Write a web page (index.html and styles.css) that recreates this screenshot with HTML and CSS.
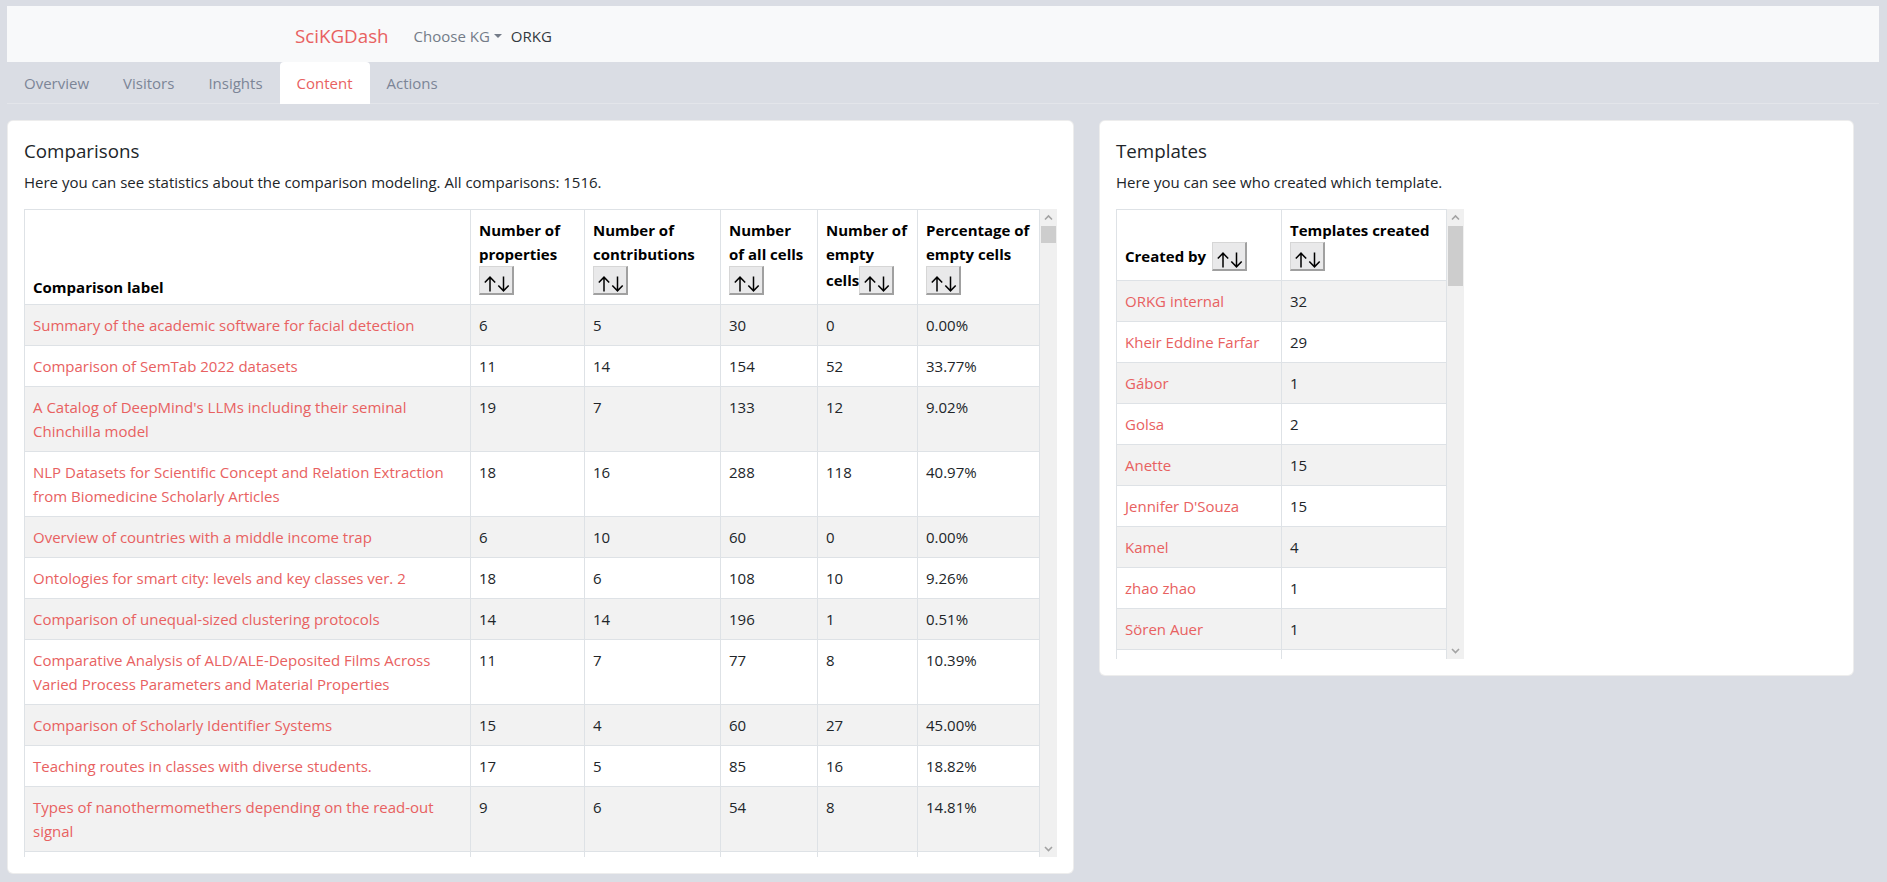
FILE: index.html
```html
<!DOCTYPE html>
<html lang="en">
<head>
<meta charset="utf-8">
<title>SciKGDash</title>
<link rel="stylesheet" href="styles.css">
</head>
<body>
<nav class="navbar">
  <a class="brand" href="#">SciKGDash</a>
  <span class="kg-choose">Choose KG<span class="caret"></span></span>
  <span class="kg-current">ORKG</span>
</nav>
<ul class="tabs">
  <li class="tab">Overview</li>
  <li class="tab">Visitors</li>
  <li class="tab">Insights</li>
  <li class="tab active">Content</li>
  <li class="tab">Actions</li>
</ul>
<main class="content">
  <section class="col">
    <div class="card">
      <h5 class="card-title">Comparisons</h5>
      <p class="card-text">Here you can see statistics about the comparison modeling. All comparisons: 1516.</p>
      <div class="scroll-frame scroll-frame-main">
        <div class="scroll-view">
          <table class="table">
            <colgroup>
              <col class="w-label"><col class="w-props"><col class="w-contrib"><col class="w-cells"><col class="w-empty"><col>
            </colgroup>
            <thead>
              <tr>
                <th class="th-plain">Comparison label</th>
                <th>Number of<br>properties<br><button class="sort-btn"><svg viewBox="0 0 26 16"><path d="M6 15.5V1M0.8 6.6 6 1.2 11.2 6.6M19.5 0.5V15M14.3 9.4 19.5 14.8 24.7 9.4"/></svg></button></th>
                <th>Number of<br>contributions<br><button class="sort-btn"><svg viewBox="0 0 26 16"><path d="M6 15.5V1M0.8 6.6 6 1.2 11.2 6.6M19.5 0.5V15M14.3 9.4 19.5 14.8 24.7 9.4"/></svg></button></th>
                <th>Number<br>of all cells<br><button class="sort-btn"><svg viewBox="0 0 26 16"><path d="M6 15.5V1M0.8 6.6 6 1.2 11.2 6.6M19.5 0.5V15M14.3 9.4 19.5 14.8 24.7 9.4"/></svg></button></th>
                <th>Number of<br>empty<br>cells<button class="sort-btn"><svg viewBox="0 0 26 16"><path d="M6 15.5V1M0.8 6.6 6 1.2 11.2 6.6M19.5 0.5V15M14.3 9.4 19.5 14.8 24.7 9.4"/></svg></button></th>
                <th>Percentage of<br>empty cells<br><button class="sort-btn"><svg viewBox="0 0 26 16"><path d="M6 15.5V1M0.8 6.6 6 1.2 11.2 6.6M19.5 0.5V15M14.3 9.4 19.5 14.8 24.7 9.4"/></svg></button></th>
              </tr>
            </thead>
            <tbody>
              <tr><td><a href="#">Summary of the academic software for facial detection</a></td><td>6</td><td>5</td><td>30</td><td>0</td><td>0.00%</td></tr>
              <tr><td><a href="#">Comparison of SemTab 2022 datasets</a></td><td>11</td><td>14</td><td>154</td><td>52</td><td>33.77%</td></tr>
              <tr><td><a href="#">A Catalog of DeepMind's LLMs including their seminal Chinchilla model</a></td><td>19</td><td>7</td><td>133</td><td>12</td><td>9.02%</td></tr>
              <tr><td><a href="#">NLP Datasets for Scientific Concept and Relation Extraction from Biomedicine Scholarly Articles</a></td><td>18</td><td>16</td><td>288</td><td>118</td><td>40.97%</td></tr>
              <tr><td><a href="#">Overview of countries with a middle income trap</a></td><td>6</td><td>10</td><td>60</td><td>0</td><td>0.00%</td></tr>
              <tr><td><a href="#">Ontologies for smart city: levels and key classes ver. 2</a></td><td>18</td><td>6</td><td>108</td><td>10</td><td>9.26%</td></tr>
              <tr><td><a href="#">Comparison of unequal-sized clustering protocols</a></td><td>14</td><td>14</td><td>196</td><td>1</td><td>0.51%</td></tr>
              <tr><td><a href="#">Comparative Analysis of ALD/ALE-Deposited Films Across Varied Process Parameters and Material Properties</a></td><td>11</td><td>7</td><td>77</td><td>8</td><td>10.39%</td></tr>
              <tr><td><a href="#">Comparison of Scholarly Identifier Systems</a></td><td>15</td><td>4</td><td>60</td><td>27</td><td>45.00%</td></tr>
              <tr><td><a href="#">Teaching routes in classes with diverse students.</a></td><td>17</td><td>5</td><td>85</td><td>16</td><td>18.82%</td></tr>
              <tr><td><a href="#">Types of nanothermomethers depending on the read-out signal</a></td><td>9</td><td>6</td><td>54</td><td>8</td><td>14.81%</td></tr>
              <tr class="row-pending"><td></td><td></td><td></td><td></td><td></td><td></td></tr>
            </tbody>
          </table>
        </div>
        <div class="scrollbar" aria-hidden="true">
          <span class="sb-btn"><svg viewBox="0 0 17 17"><path d="M5 10.5 8.5 7 12 10.5"/></svg></span>
          <span class="sb-track"><span class="sb-thumb sb-thumb-min"></span></span>
          <span class="sb-btn"><svg viewBox="0 0 17 17"><path d="M5 7 8.5 10.5 12 7"/></svg></span>
        </div>
      </div>
    </div>
  </section>
  <section class="col">
    <div class="card">
      <h5 class="card-title">Templates</h5>
      <p class="card-text">Here you can see who created which template.</p>
      <div class="scroll-frame scroll-frame-side">
        <div class="scroll-view">
          <table class="table">
            <thead>
              <tr>
                <th>Created by <button class="sort-btn"><svg viewBox="0 0 26 16"><path d="M6 15.5V1M0.8 6.6 6 1.2 11.2 6.6M19.5 0.5V15M14.3 9.4 19.5 14.8 24.7 9.4"/></svg></button></th>
                <th>Templates created<br><button class="sort-btn"><svg viewBox="0 0 26 16"><path d="M6 15.5V1M0.8 6.6 6 1.2 11.2 6.6M19.5 0.5V15M14.3 9.4 19.5 14.8 24.7 9.4"/></svg></button></th>
              </tr>
            </thead>
            <tbody>
              <tr><td><a href="#">ORKG internal</a></td><td>32</td></tr>
              <tr><td><a href="#">Kheir Eddine Farfar</a></td><td>29</td></tr>
              <tr><td><a href="#">Gábor</a></td><td>1</td></tr>
              <tr><td><a href="#">Golsa</a></td><td>2</td></tr>
              <tr><td><a href="#">Anette</a></td><td>15</td></tr>
              <tr><td><a href="#">Jennifer D'Souza</a></td><td>15</td></tr>
              <tr><td><a href="#">Kamel</a></td><td>4</td></tr>
              <tr><td><a href="#">zhao zhao</a></td><td>1</td></tr>
              <tr><td><a href="#">Sören Auer</a></td><td>1</td></tr>
              <tr class="row-pending"><td></td><td></td></tr>
            </tbody>
          </table>
        </div>
        <div class="scrollbar" aria-hidden="true">
          <span class="sb-btn"><svg viewBox="0 0 17 17"><path d="M5 10.5 8.5 7 12 10.5"/></svg></span>
          <span class="sb-track"><span class="sb-thumb sb-thumb-side"></span></span>
          <span class="sb-btn"><svg viewBox="0 0 17 17"><path d="M5 7 8.5 10.5 12 7"/></svg></span>
        </div>
      </div>
    </div>
  </section>
</main>
</body>
</html>
```

FILE: styles.css
```css
* { box-sizing: border-box; }

html, body { margin: 0; }

body {
  background: #dadde4;
  font-family: "Open Sans", "Noto Sans", sans-serif;
  font-size: 15px;
  line-height: 24px;
  color: #212529;
  padding: 6px 8px 0 7px;
  height: 882px;
  overflow: hidden;
}

a { color: #e86161; text-decoration: none; }

/* navbar */
.navbar {
  display: flex;
  align-items: center;
  height: 56px;
  padding: 4px 0 0 288px;
  background: #f8f9fa;
}
.brand {
  font-size: 18.75px;
  line-height: 30px;
  color: #e86161;
  margin-right: 25px;
}
.kg-choose {
  display: flex;
  align-items: center;
  color: #747c88;
}
.caret {
  width: 0;
  height: 0;
  margin-left: 4px;
  border-top: 4.5px solid #747c88;
  border-left: 4px solid transparent;
  border-right: 4px solid transparent;
}
.kg-current {
  color: #343a40;
  margin-left: 9px;
}

/* tabs */
.tabs {
  display: flex;
  list-style: none;
  margin: 0;
  padding: 0;
  border-bottom: 1px solid #e3e5ea;
}
.tab {
  padding: 8px 16px;
  border: 1px solid transparent;
  border-radius: 4px 4px 0 0;
  margin-bottom: -1px;
  color: #7c8597;
}
.tab.active {
  background: #fff;
  color: #e86161;
}

/* layout */
.content {
  display: grid;
  grid-template-columns: 7fr 5fr;
  align-items: start;
  margin-top: 16px;
}
.col { padding-right: 25px; }

.card {
  background: #fff;
  border: 1px solid rgba(0, 0, 0, 0.07);
  border-radius: 6px;
  padding: 16px;
}
.card-title {
  font-size: 18.75px;
  font-weight: 400;
  line-height: 24px;
  margin: 0 0 7px;
  padding-top: 2px;
  color: #212529;
}
.card-text { margin: 0 0 15px; }

/* scrollable table frame */
.scroll-frame { display: flex; }
.scroll-frame-main { height: 648px; }
.scroll-frame-side { height: 450px; width: 348px; }
.scroll-view { flex: 1; min-width: 0; overflow: hidden; }

.scrollbar {
  width: 17px;
  flex: none;
  display: flex;
  flex-direction: column;
  background: #f0f0f0;
}
.sb-btn { height: 17px; flex: none; }
.sb-btn svg {
  display: block;
  width: 17px;
  height: 17px;
  fill: none;
  stroke: #a3a3a3;
  stroke-width: 1.6;
}
.sb-track { flex: 1; display: flex; flex-direction: column; }
.sb-thumb { display: block; background: #cdcdcd; margin: 0 1px; }
.sb-thumb-min { height: 17px; }
.sb-thumb-side { height: 60px; }

/* tables */
.table {
  width: 100%;
  border-collapse: collapse;
  table-layout: fixed;
}
.table th,
.table td {
  border: 1px solid #dee2e6;
  padding: 8px;
  text-align: left;
}
.table th {
  vertical-align: bottom;
  font-weight: 700;
  color: #000;
  white-space: nowrap;
  padding-bottom: 9px;
}
.table th.th-plain { padding-bottom: 5px; }
.table td { vertical-align: top; }
.table tbody tr:nth-child(odd) { background: #f2f2f2; }
.table .row-pending td { height: 41px; }

.w-label { width: 446px; }
.w-props { width: 114px; }
.w-contrib { width: 136px; }
.w-cells { width: 97px; }
.w-empty { width: 100px; }

.sort-btn {
  display: inline-block;
  width: 35px;
  height: 29px;
  margin: 0 0 0 2px;
  padding: 0;
  vertical-align: -7px;
  line-height: 0;
  background: #e9e9ea;
  border-style: solid;
  border-width: 1px 2px 2px 1px;
  border-color: #d6d6d6 #a0a0a0 #a0a0a0 #d6d6d6;
}
th > br + .sort-btn { margin-left: 0; }
.sort-btn svg {
  display: block;
  width: 26px;
  height: 16px;
  margin: 8px 0 0 4px;
  fill: none;
  stroke: #000;
  stroke-width: 1.5;
}
```
